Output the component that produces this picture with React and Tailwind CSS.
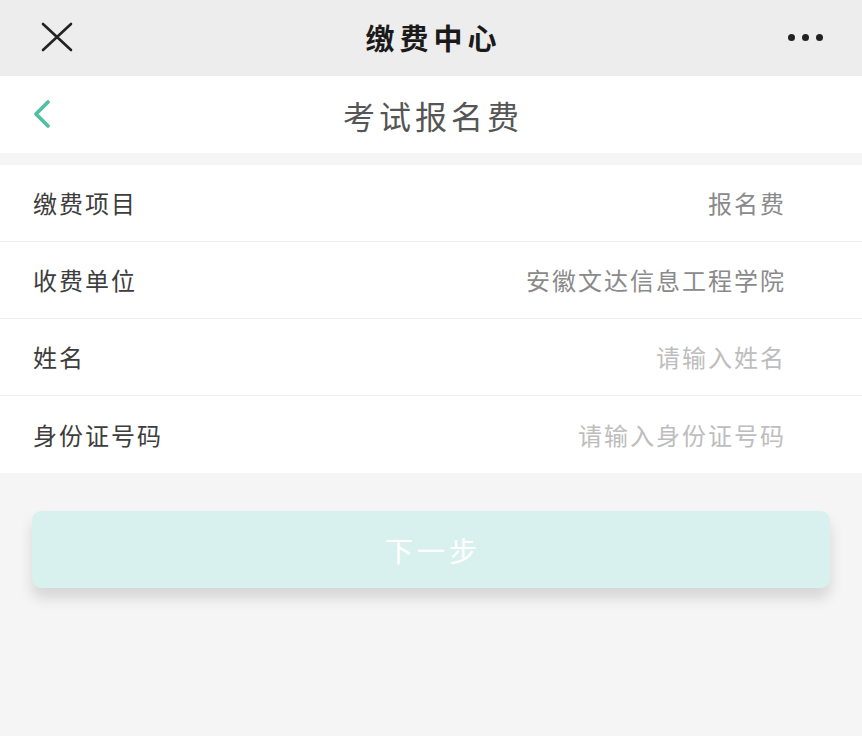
import React, { useState } from "react";

const font = { fontFamily: '"Noto Sans CJK SC", "Noto Sans", sans-serif' };

// One line of the payment form
function FormRow({ label, value, placeholder, last }) {
  return (
    <div
      className={
        "flex items-center justify-between h-[77px] pl-[33px] pr-[76px] bg-white" +
        (last ? "" : " border-b border-[#efefef]")
      }
    >
      <span className="text-[24px] tracking-[2px] text-[#3d3d3d]">{label}</span>
      {value ? (
        <span className="text-[24px] tracking-[2px] text-[#8a8a8a]">{value}</span>
      ) : (
        <input
          placeholder={placeholder}
          className="w-[360px] text-right text-[24px] tracking-[2px] text-[#444] outline-none bg-transparent placeholder:text-[#bdbdbd]"
          style={font}
        />
      )}
    </div>
  );
}

function App() {
  const [sending] = useState(false);

  return (
    <div className="min-h-[736px] bg-[#f5f5f5]" style={font}>
      {/* top bar */}
      <div className="relative flex items-center justify-center h-[76px] bg-[#ededed]">
        <svg
          className="absolute left-[40px] top-[22px]"
          width="34"
          height="30"
          viewBox="0 0 34 30"
          fill="none"
          stroke="#222"
          strokeWidth="2.6"
          strokeLinecap="round"
        >
          <path d="M3 2 L31 28 M31 2 L3 28" />
        </svg>
        <h1 className="text-[29px] font-bold tracking-[5px] text-[#1a1a1a] pl-[5px]">缴费中心</h1>
        <div className="absolute right-[39px] top-[34px] flex gap-[7px]">
          <span className="w-[7px] h-[7px] rounded-full bg-[#222]"></span>
          <span className="w-[7px] h-[7px] rounded-full bg-[#222]"></span>
          <span className="w-[7px] h-[7px] rounded-full bg-[#222]"></span>
        </div>
      </div>

      {/* page header */}
      <div className="relative flex items-center justify-center h-[77px] bg-white">
        <svg
          className="absolute left-[32px] top-[23px]"
          width="20"
          height="30"
          viewBox="0 0 20 30"
          fill="none"
          stroke="#52bfa5"
          strokeWidth="3.8"
          strokeLinecap="round"
          strokeLinejoin="round"
        >
          <path d="M16 3 L4 15 L16 27" />
        </svg>
        <h2 className="text-[32px] tracking-[4px] text-[#555] pl-[4px]">考试报名费</h2>
      </div>

      <div className="h-[12px]"></div>

      {/* form */}
      <div>
        <FormRow label="缴费项目" value="报名费" />
        <FormRow label="收费单位" value="安徽文达信息工程学院" />
        <FormRow label="姓名" placeholder="请输入姓名" />
        <FormRow label="身份证号码" placeholder="请输入身份证号码" last />
      </div>

      <div className="px-[32px] pt-[38px]">
        <button
          className="w-full h-[77px] rounded-[9px] bg-[#d9f1ee] text-white text-[28px] tracking-[4px] pl-[4px] shadow-[0_10px_14px_rgba(0,0,0,0.13)]"
          style={font}
        >
          {sending ? "提交中..." : "下一步"}
        </button>
      </div>
    </div>
  );
}

export default App;
